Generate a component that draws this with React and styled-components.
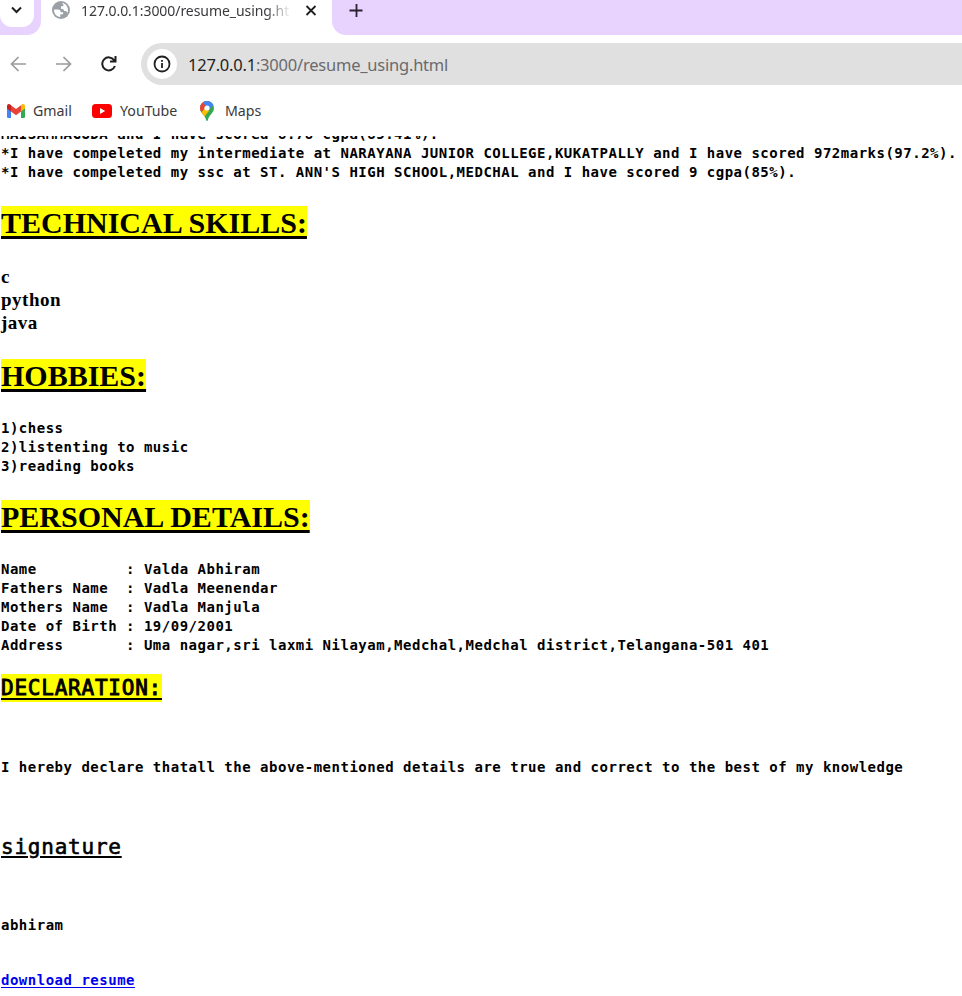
import React from "react";
import styled, { createGlobalStyle } from "styled-components";

const Global = createGlobalStyle`
  * { box-sizing: border-box; }
  html, body { margin: 0; background: #fff; }
  h2, p, pre { margin: 0; }
`;

const ui = `"Noto Sans", "Open Sans", sans-serif`;

const Window = styled.div`
  display: flex;
  flex-direction: column;
  width: 962px;
  height: 996px;
  overflow: hidden;
  background: #fff;
  color: #000;
`;

const TabStrip = styled.div`
  display: flex;
  flex: none;
  height: 35px;
  font-family: ${ui};
`;

const SearchCorner = styled.div`
  width: 41px;
  height: 35px;
  background: #e8d3ff;
  border-bottom-right-radius: 14px;
`;

const SearchButton = styled.div`
  display: flex;
  width: 34px;
  height: 27px;
  padding: 6px 0 0 11px;
  background: #fff;
  border-radius: 0 0 12px 12px;
`;

const Tab = styled.div`
  display: flex;
  width: 291px;
  height: 24px;
  padding-left: 11px;
  align-items: flex-start;
`;

const TabTitle = styled.span`
  width: 208px;
  height: 22px;
  margin-left: 11px;
  overflow: hidden;
  font-size: 14px;
  line-height: 22px;
  letter-spacing: -0.06px;
  white-space: nowrap;
  color: #3a3a3d;
  mask-image: linear-gradient(to right, #000 185px, transparent 210px);
`;

const CloseIcon = styled.svg`
  margin: 5px 0 0 16px;
`;

const StripRest = styled.div`
  display: flex;
  flex: 1;
  align-items: flex-start;
  padding: 4px 0 0 17px;
  background: #e8d3ff;
  border-bottom-left-radius: 14px;
`;

const Toolbar = styled.div`
  display: flex;
  flex: none;
  align-items: center;
  height: 42px;
  margin-top: 8px;
  padding-left: 10px;
  font-family: ${ui};
`;

const NavIcon = styled.svg`
  flex: none;
  margin-right: ${(p) => p.$gap}px;
`;

const AddressBar = styled.div`
  display: flex;
  flex: 1;
  align-items: center;
  height: 42px;
  padding-left: 6px;
  background: #e0e0e0;
  border-radius: 21px 0 0 21px;
`;

const InfoBadge = styled.div`
  display: grid;
  place-items: center;
  width: 30px;
  height: 30px;
  border-radius: 50%;
  background: #fff;
`;

const Url = styled.span`
  margin-left: 11px;
  padding-top: 2px;
  font-size: 16.5px;
  line-height: 24px;
  white-space: nowrap;
  color: #6a6a6d;
  letter-spacing: -0.22px;
`;

const Host = styled.span`
  color: #1f1f22;
`;

const Bookmarks = styled.div`
  display: flex;
  flex: none;
  align-items: center;
  height: 51px;
  padding-left: 7px;
  font-family: ${ui};
`;

const Bookmark = styled.div`
  display: flex;
  align-items: center;
  width: ${(p) => p.$width}px;
  gap: ${(p) => p.$gap}px;
  font-size: 14.2px;
  line-height: 20px;
  color: #3a3a3d;
`;

const Page = styled.main`
  flex: 1;
  overflow: hidden;
  padding-left: 1px;
`;

const Lines = styled.pre`
  margin-top: ${(p) => p.$top}px;
  font: bold 14px/19px "DejaVu Sans Mono", "Liberation Mono", monospace;
  letter-spacing: 0.505px;
`;

const Skills = styled.p`
  margin: 26px 0 25px;
  font: bold 19px/23px "Liberation Serif", serif;
  letter-spacing: 0.5px;
`;

const Heading = styled.h2`
  width: max-content;
  height: 33px;
  margin-top: ${(p) => p.$top}px;
  background: #ff0;
  font: bold 30px/34px "Liberation Serif", serif;
  text-decoration: underline 3px;
  text-underline-offset: 3px;
  text-decoration-skip-ink: none;
`;

const MonoHeading = styled.h2`
  width: max-content;
  height: 28px;
  margin-top: ${(p) => p.$top}px;
  background: ${(p) => p.$mark || "transparent"};
  font: normal 21px/29px "DejaVu Sans Mono", monospace;
  letter-spacing: 0.77px;
  -webkit-text-stroke: ${(p) => p.$stroke}px currentColor;
  text-decoration: underline 2px;
  text-underline-offset: ${(p) => p.$offset}px;
`;

const Link = styled.a`
  color: #00e;
  text-decoration: underline 1px;
  text-underline-offset: 2px;
`;

export default function App() {
  return (
    <Window>
      <Global />
      <TabStrip>
        <SearchCorner>
          <SearchButton>
            <svg width="11" height="9" viewBox="0 0 11 9" fill="none" stroke="#1f1f22" strokeWidth="2">
              <path d="M1 1.5 5.5 6 10 1.5" />
            </svg>
          </SearchButton>
        </SearchCorner>
        <Tab>
          <svg width="18" height="20" viewBox="0 0 18 20">
            <circle cx="9" cy="10" r="9" fill="#9aa0a6" />
            <path
              d="M2 9.6h4.200c1.700 0 2.500 1 2.500 2.700h2.400v1.900H8.300v2.900C4.600 16.900 1.900 13.800 2 9.600zM10.500 3c3.200.7 5.500 3.400 5.500 7 0 1-.2 1.900-.6 2.700-.6-1.300-1.600-1.700-3.300-1.700-.3-1.800-1-2.200-3.100-2.300V6.300c2 0 2.600-.3 2.600-1.800-.8 0-1.100-.5-1.100-1.500z"
              fill="#fff"
            />
          </svg>
          <TabTitle>127.0.0.1:3000/resume_using.html</TabTitle>
          <CloseIcon width="12" height="11" viewBox="0 0 12 11" stroke="#1f1f22" strokeWidth="1.8">
            <path d="M1.500 1 10.500 10M10.500 1 1.500 10" />
          </CloseIcon>
        </Tab>
        <StripRest>
          <svg width="14" height="14" viewBox="0 0 14 14" stroke="#2a202e" strokeWidth="1.8">
            <path d="M.5 6.500h13M7.500 0v13" />
          </svg>
        </StripRest>
      </TabStrip>
      <Toolbar>
        <NavIcon $gap={28} width="17" height="16" viewBox="0 0 17 16" fill="none" stroke="#9b9b9b" strokeWidth="1.7">
          <path d="M16 8H2M8.500 1 1.500 8l7 7" />
        </NavIcon>
        <NavIcon $gap={29} width="17" height="16" viewBox="0 0 17 16" fill="none" stroke="#9b9b9b" strokeWidth="1.7">
          <path d="M1 8h14M8.500 1l7 7-7 7" />
        </NavIcon>
        <NavIcon $gap={24} width="16" height="16" viewBox="0 0 16 16" fill="none" stroke="#1f1f22" strokeWidth="2">
          <path d="M13.200 4.300A6.500 6.500 0 1 0 13.900 10M14.500 0v5.500H9" />
        </NavIcon>
        <AddressBar>
          <InfoBadge>
            <svg width="18" height="18" viewBox="0 0 18 18">
              <circle cx="9" cy="9" r="7.500" fill="none" stroke="#1f1f22" strokeWidth="1.8" />
              <path d="M8.100 8h1.800v5H8.100zM8.100 5h1.800v1.800H8.100z" fill="#1f1f22" />
            </svg>
          </InfoBadge>
          <Url>
            <Host>127.0.0.1</Host>:3000/resume_using.html
          </Url>
        </AddressBar>
      </Toolbar>
      <Bookmarks>
        <Bookmark $width={85} $gap={8}>
          <svg width="18" height="14" viewBox="0 0 18 14">
            <path d="M0 2v10.700C0 13.400.6 14 1.300 14H4V5z" fill="#4285f4" />
            <path d="M14 5v9h2.700c.7 0 1.300-.6 1.300-1.300V2z" fill="#34a853" />
            <path d="M14 1v6.500l4-3V2c0-1.700-1.800-2.500-3-1.600z" fill="#fbbc04" />
            <path d="M4 1v6.500l-4-3V2C0 .3 1.800-.5 3 .4z" fill="#c5221f" />
            <path d="M4 7.500V1.200L9 5l5-3.800v6.300l-5 3.700z" fill="#ea4335" />
          </svg>
          Gmail
        </Bookmark>
        <Bookmark $width={108} $gap={8}>
          <svg width="20" height="14" viewBox="0 0 20 14">
            <rect width="20" height="14" rx="3.500" fill="#f00" />
            <path d="M8 4v6l5.200-3z" fill="#fff" />
          </svg>
          YouTube
        </Bookmark>
        <Bookmark $width={70} $gap={11}>
          <svg width="14" height="20" viewBox="0 0 14 20">
            <defs>
              <clipPath id="pin">
                <path d="M7 0a7 7 0 0 1 7 7c0 5-5 6.500-6.300 12.500-.2.7-1.200.7-1.400 0C5 13.500 0 12 0 7a7 7 0 0 1 7-7z" />
              </clipPath>
            </defs>
            <g clipPath="url(#pin)">
              <path d="M0 0h14v20H0z" fill="#34a853" />
              <path d="M0 0h10L4 7 0 5z" fill="#ea4335" />
              <path d="M4 0h10v4L9 8 3 2z" fill="#4285f4" />
              <path d="M1 3 5.500 6.500 1 12l-2-5z" fill="#ea4335" />
              <path d="M1 12 5 7l4 3-5 6z" fill="#fbbc04" />
            </g>
            <circle cx="7" cy="7" r="2.600" fill="#fff" />
          </svg>
          Maps
        </Bookmark>
      </Bookmarks>
      <Page>
        <Lines $top={-11}>{`MAISAMMAGUDA and I have scored 8.78 cgpa(85.41%).
*I have compeleted my intermediate at NARAYANA JUNIOR COLLEGE,KUKATPALLY and I have scored 972marks(97.2%).
*I have compeleted my ssc at ST. ANN'S HIGH SCHOOL,MEDCHAL and I have scored 9 cgpa(85%).`}</Lines>
        <Heading $top={24}>TECHNICAL SKILLS:</Heading>
        <Skills>
          c<br />
          python<br />
          java
        </Skills>
        <Heading $top={0}>HOBBIES:</Heading>
        <Lines $top={27}>{`1)chess
2)listenting to music
3)reading books`}</Lines>
        <Heading $top={24}>PERSONAL DETAILS:</Heading>
        <Lines $top={27}>{`Name          : Valda Abhiram
Fathers Name  : Vadla Meenendar
Mothers Name  : Vadla Manjula
Date of Birth : 19/09/2001
Address       : Uma nagar,sri laxmi Nilayam,Medchal,Medchal district,Telangana-501 401`}</Lines>
        <MonoHeading $top={19} $mark="#ff0" $stroke={0.9} $offset={3}>DECLARATION:</MonoHeading>
        <Lines $top={56}>I hereby declare thatall the above-mentioned details are true and correct to the best of my knowledge</Lines>
        <MonoHeading $top={56} $stroke={0.6} $offset={2}>signature</MonoHeading>
        <Lines $top={55}>abhiram</Lines>
        <Lines $top={36}>
          <Link href="#">download resume</Link>
        </Lines>
      </Page>
    </Window>
  );
}
